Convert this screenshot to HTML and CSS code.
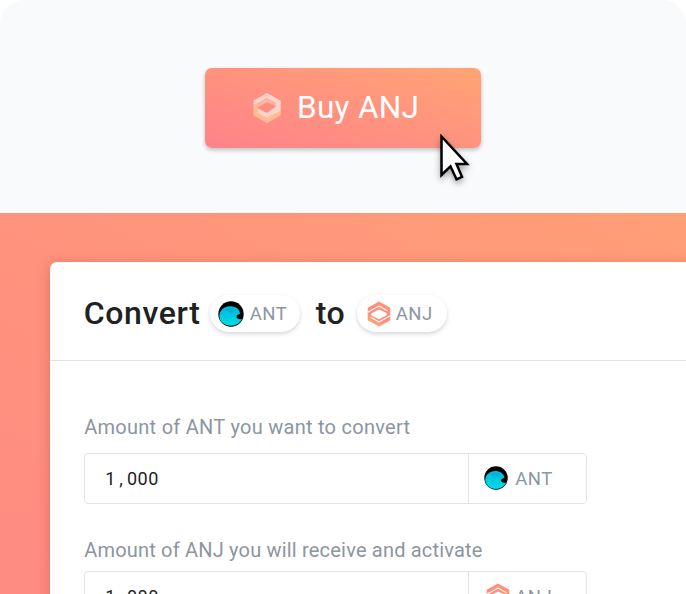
FILE: index.html
```html
<!DOCTYPE html>
<html lang="en">
<head>
<meta charset="utf-8">
<title>Buy ANJ</title>
<link rel="stylesheet" href="styles.css">
</head>
<body>
<svg class="defs" aria-hidden="true">
  <defs>
    <linearGradient id="coral" x1="0" y1="1" x2=".7" y2="0"><stop offset="0" stop-color="#ffb074"/><stop offset=".5" stop-color="#ff8c80"/><stop offset="1" stop-color="#ff9474"/></linearGradient>
    <linearGradient id="cyan" x1="0" y1="0" x2="0" y2="1"><stop offset="0" stop-color="#00b8dc"/><stop offset="1" stop-color="#00dce6"/></linearGradient>
    <symbol id="anj" viewBox="0 0 24 26">
      <path fill="url(#coral)" fill-rule="evenodd" d="M12 .6 23.300 6.800V19.200L12 25.400.7 19.200V6.800ZM12 8.400 4.500 12.300V14.400L12 18.200 19.500 14.200V11.900Z"/>
      <path fill="none" stroke="#fff" stroke-width="1.100" d="M.7 11.300 12 5.100 20.500 9.800M23.300 14.700 12 20.900 3.500 16.200"/>
    </symbol>
    <symbol id="ant" viewBox="0 0 26 26">
      <circle cx="13" cy="13" r="12.700" fill="#000"/>
      <path fill="url(#cyan)" d="M1.300 14.500C2 9 6.300 5.500 12 5.300c5.500 0 9.500 2.500 10 7.200-.3 1-2.700.8-3.400 2.500-.7 2.200 1.600 3.800 5.400 3.100C21.800 22.400 17.500 24.800 13 24.800 6.500 24.800 1.200 20.500 1.300 14.500Z"/>
      <path fill="#009fc5" opacity=".4" d="M7 8.500c5-2.500 9-1 10.500 1.500-3 2.500-7.500 2-10.500-1.500Z"/>
    </symbol>
  </defs>
</svg>
<main class="page">
  <section class="hero">
    <button class="buy">
      <svg class="buy-icon" viewBox="0 0 28 30">
        <path fill="#ffd2ca" d="M.5 7.500 14 0l13.500 7.500V22L23 20V10l-9-5L.5 12.500Z"/>
        <path fill="#ffbd91" d="M.5 12.500 5 10.200V20l9 5 13.500-7.500V22.500L14 30 .5 22.500Z"/>
        <path fill="#ffb3a3" d="M5 10.300 14 5l9 5.300v3l-9-4-9 5Z"/>
        <path fill="#ffd2ca" d="M5 15.500l9 4.500 9-6.500V10l4.500-1.500V17.500L14 25 5 20Z"/>
      </svg>
      <span>Buy ANJ</span>
    </button>
    <svg class="cursor" viewBox="0 0 30 48"><path d="M1.500 2.500v38.500l9-8.700 6 13 5.500-2.500-5.500-12.800H27Z" fill="#fff" stroke="#000" stroke-width="2.500"/></svg>
  </section>
  <section class="stage">
    <div class="card">
      <h1 class="title"><span class="word-convert">Convert</span>
        <span class="pill"><svg class="ant"><use href="#ant"/></svg><span class="token">ANT</span></span>
        <span class="word-to">to</span>
        <span class="pill"><svg class="anj"><use href="#anj"/></svg><span class="token">ANJ</span></span>
      </h1>
      <div class="form">
        <label class="label">Amount of ANT you want to convert</label>
        <div class="field"><div class="value">1<span class="comma">,</span>000</div><div class="unit"><svg class="ant"><use href="#ant"/></svg><span class="token">ANT</span></div></div>
        <label class="label second">Amount of ANJ you will receive and activate</label>
        <div class="field"><div class="value">1<span class="comma">,</span>000</div><div class="unit"><svg class="anj"><use href="#anj"/></svg><span class="token">ANJ</span></div></div>
      </div>
    </div>
  </section>
</main>
</body>
</html>
```
FILE: styles.css
```css
* { box-sizing: border-box; }
body { margin: 0; background: #fff; font-family: Roboto, "Liberation Sans", sans-serif; }
.defs { position: absolute; width: 0; height: 0; }
.page { width: 686px; height: 594px; overflow: hidden; border-radius: 24px 24px 0 0; background: #f9fafc; }
.hero { position: relative; height: 213px; padding-top: 68.4px; }
.buy { display: flex; align-items: center; width: 276px; height: 80px; margin: 0 auto; padding: 0 0 1px 48px; border: 0; border-radius: 7px; background: linear-gradient(17deg, #ff8489 5%, #ff9a7a 72%, #ffa573); box-shadow: 0 2px 4px rgba(0,0,0,.24); color: #fff; font: 400 31.5px/40px Roboto, sans-serif; letter-spacing: .3px; }
.buy-icon { width: 28px; height: 30px; margin-right: 16px; }
.cursor { position: absolute; left: 440px; top: 134px; width: 30px; height: 48px; filter: drop-shadow(0 3px 3px rgba(0,0,0,.35)); }
.stage { height: 381px; padding: 48.6px 0 0 49.7px; background: linear-gradient(25deg, #ff8c82, #ff927d 50%, #ff9f77); }
.card { width: 700px; height: 400px; background: #fff; border-radius: 7px; box-shadow: 0 3px 14px rgba(115,25,25,.25); }
.title { display: flex; align-items: center; height: 99px; margin: 0; padding: 6px 0 0 34px; border-bottom: 1px solid #dde4e9; color: #202122; font-size: 32px; font-weight: 500; }
.word-convert { width: 126px; padding-bottom: 2px; letter-spacing: .65px; }
.word-to { width: 41px; margin-left: 16px; padding-bottom: 2px; letter-spacing: .6px; }
.pill { display: flex; align-items: center; width: 90px; height: 37px; padding-left: 8px; border-radius: 19px; background: #fff; box-shadow: 0 2px 4px rgba(0,0,0,.16); }
.ant { width: 26px; height: 26px; margin-right: 6px; }
.anj { width: 24px; height: 26px; margin: 0 5px 0 2px; }
.token { padding-top: 1px; color: #8b96a3; font-size: 18.5px; font-weight: 400; letter-spacing: .5px; }
.form { padding: 54px 0 0 34.5px; }
.label { display: block; height: 38px; color: #8b96a1; font-size: 20px; line-height: 25px; letter-spacing: .27px; }
.field { display: flex; width: 503px; height: 51px; border: 1px solid #dee6eb; border-radius: 4px; background: #fff; }
.value { width: 383px; padding-left: 20px; line-height: 49px; color: #202122; font-size: 18px; letter-spacing: .6px; }
.comma { display: inline-block; width: 11px; text-align: center; }
.unit { display: flex; align-items: center; flex: 1; padding-left: 15px; border-left: 1px solid #dee6eb; }
.unit .ant { width: 24px; height: 24px; margin-right: 7px; }
.second { margin-top: 33px; height: 34px; padding-top: 1px; letter-spacing: .19px; }
```
